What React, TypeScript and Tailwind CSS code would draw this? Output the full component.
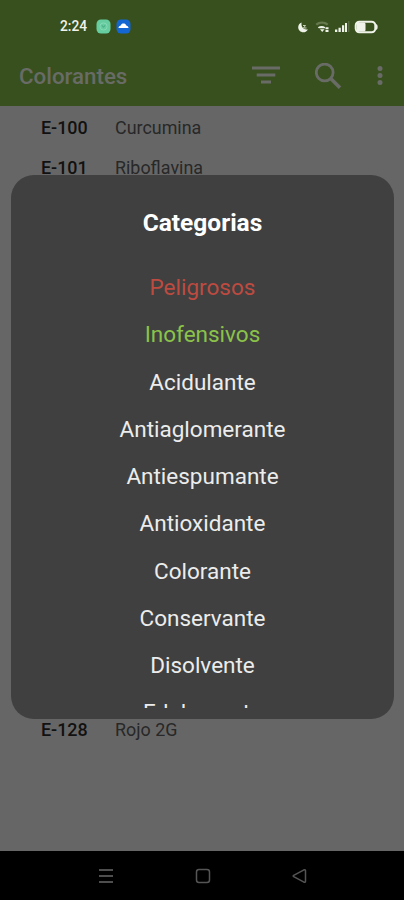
import React from 'react';

const additives = [
  { code: 'E-100', name: 'Curcumina' },
  { code: 'E-101', name: 'Riboflavina' },
];

const categories = [
  { name: 'Peligrosos', color: 'text-[#bd4b40]' },
  { name: 'Inofensivos', color: 'text-[#8bc34a]' },
  { name: 'Acidulante', color: 'text-[#ececec]' },
  { name: 'Antiaglomerante', color: 'text-[#ececec]' },
  { name: 'Antiespumante', color: 'text-[#ececec]' },
  { name: 'Antioxidante', color: 'text-[#ececec]' },
  { name: 'Colorante', color: 'text-[#ececec]' },
  { name: 'Conservante', color: 'text-[#ececec]' },
  { name: 'Disolvente', color: 'text-[#ececec]' },
  { name: 'Edulcorante', color: 'text-[#ececec]' },
];

function StatusBar() {
  return (
    <div className="flex h-[53px] items-center pl-[60px] pr-6">
      <span className="w-[36px] text-[13.8px] font-medium leading-none text-[#f0f3ec]">2:24</span>
      <svg width="35" height="15" viewBox="0 0 35 15">
        <rect x="0.5" y="0.5" width="14" height="14" rx="4.5" fill="#65cda0" />
        <circle cx="7.5" cy="7.5" r="3.6" fill="none" stroke="#85d9b5" strokeWidth="1" />
        <path d="M6 6.3l1.5 2 1.5-2" fill="none" stroke="#43a67f" strokeWidth="1" />
        <rect x="20.5" y="0.5" width="14" height="14" rx="4.5" fill="#1467d2" />
        <path d="M22.5 9c0-1.300.8-2 2-2.300C25.200 5.100 26.200 4.500 27.500 4.500s2.300.6 3 2.200c1.200.3 2 1 2 2.300z" fill="#fff" />
      </svg>
      <svg className="ml-auto" width="83" height="16" viewBox="0 0 83 16" fill="#eef2e9">
        <path d="M4.600 3.500C2.500 4.200 1.200 6 1.200 8.300c0 2.800 2.200 5 5 5 2.200 0 4-1.200 4.700-3.100-3.700 1-7.200-2-6.300-6.700z" />
        <path d="M6 6.500h2.500L6.500 9h3" fill="none" stroke="#c6d0bb" strokeWidth="1" />
        <path d="M18.500 5c4-3.200 9-3.200 13 0l-1.600 1.500c-3-2.300-6.800-2.300-9.800 0z" fill="#65784e" />
        <path d="M20.800 8.300c2.500-1.600 5.200-1.600 7.200-.3v1.300h-6.200zM23 10.200h4.500L25.200 12.900z" />
        <path d="M28.500 8.200h3v2h-3zM28.500 11h3v2h-3z" />
        <path d="M38 10.500h2.300V13H38zM41.500 8.800h2.300V13h-2.300zM45 6.300h2.200V13H45zM48 4h2v9h-2z" />
        <path d="M51.300 2h1v11h-1z" fill="#65784e" />
        <rect x="58.700" y="2.700" width="19.600" height="10.600" rx="3.700" fill="none" stroke="#eef2e9" strokeWidth="2" />
        <rect x="59.500" y="3.500" width="9" height="9" rx="1.500" />
        <path d="M79 5c2.200.6 2.200 5.400 0 6z" />
      </svg>
    </div>
  );
}

function AppBar() {
  return (
    <div className="flex h-[53px] items-center pl-[19px] pb-[7px]">
      <h1 className="flex-1 pt-px text-[22.300px] font-medium leading-none text-[#686b66]">Colorantes</h1>
      <svg width="28" height="20" viewBox="0 0 28 20" fill="#686b66" className="mr-[35px]">
        <path d="M0 0.500h28v3H0zM4.700 7.500h18.600v3H4.700zM9 14.500h10v3H9z" />
      </svg>
      <svg width="27" height="27" viewBox="0 0 27 27" fill="none" stroke="#686b66" className="mr-[35px]">
        <circle cx="9.700" cy="9.500" r="8.400" strokeWidth="2.800" />
        <path d="M15.700 15.500l9.300 9.300" strokeWidth="3.600" />
      </svg>
      <svg width="6" height="20" viewBox="0 0 6 20" fill="#686b66" className="mr-[21px]">
        <circle cx="3" cy="2.500" r="2.500" />
        <circle cx="3" cy="9.500" r="2.500" />
        <circle cx="3" cy="16.500" r="2.500" />
      </svg>
    </div>
  );
}

function AdditiveRow({ code, name }: { code: string; name: string }) {
  return (
    <div className="flex h-10 items-center pl-[41px] text-[17.900px] leading-none text-[#282828]">
      <span className="w-[74px] font-medium text-[#111]">{code}</span>
      <span>{name}</span>
    </div>
  );
}

function CategoryDialog() {
  return (
    <div className="absolute left-[11px] top-[175px] flex h-[544px] w-[383px] flex-col overflow-hidden rounded-[23px] bg-[#404040] pb-[11px]">
      <h2 className="pt-[32px] text-center text-[24.500px] font-bold leading-8 text-white">Categorias</h2>
      <ul className="mt-[25px] min-h-0 flex-1 overflow-hidden">
        {categories.map((c) => (
          <li key={c.name} className={`h-[47.250px] text-center text-[22.500px] leading-[47px] ${c.color}`}>
            {c.name}
          </li>
        ))}
      </ul>
    </div>
  );
}

export default function App() {
  return (
    <div className="relative flex h-[900px] w-[404px] flex-col overflow-hidden bg-[#666] font-['Roboto',sans-serif]">
      <header className="h-[106px] shrink-0 bg-[#38501e]">
        <StatusBar />
        <AppBar />
      </header>
      <main className="flex-1 pt-[2px]">
        {additives.map((a) => (
          <AdditiveRow key={a.code} {...a} />
        ))}
        <div className="mt-[522px]">
          <AdditiveRow code="E-128" name="Rojo 2G" />
        </div>
      </main>
      <nav className="flex h-[49px] shrink-0 items-center justify-between bg-black pl-[98px] pr-[96px]">
        <svg width="16" height="16" viewBox="0 0 16 16" stroke="#4e4e4e" strokeWidth="2">
          <path d="M1 2h14M1 8h14M1 14h14" />
        </svg>
        <svg width="16" height="16" viewBox="0 0 16 16" fill="none" stroke="#555" strokeWidth="1.500">
          <rect x="1.500" y="1.500" width="13" height="13" rx="2.500" />
        </svg>
        <svg width="16" height="16" viewBox="0 0 16 16" fill="none" stroke="#555" strokeWidth="1.500" strokeLinejoin="round">
          <path d="M12 1.800L1.700 7.300q-1 .7 0 1.400L12 14.200q1.500.3 1.500-1V2.800q0-1.300-1.500-1z" />
        </svg>
      </nav>
      <CategoryDialog />
    </div>
  );
}
